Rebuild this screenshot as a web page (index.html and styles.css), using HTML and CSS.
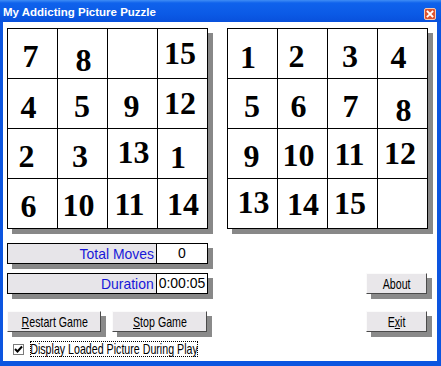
FILE: index.html
```html
<!DOCTYPE html>
<html lang="en">
<head>
    <meta charset="UTF-8">
    <title>My Addicting Picture Puzzle</title>
    <link rel="stylesheet" href="styles.css">
</head>
<body>
    <div class="window">
        <div class="titlebar">
            <span class="title">My Addicting Picture Puzzle</span>
            <span class="close">
                <svg width="12" height="12" viewBox="0 0 12 12">
                    <rect x="0.5" y="0.5" width="11" height="11" rx="1.5" fill="#dc5330" stroke="#f6c9b3"/>
                    <path d="M3.5 3.5 L8.5 8.5 M8.5 3.5 L3.5 8.5" stroke="#fff" stroke-width="1.8" stroke-linecap="square"/>
                </svg>
            </span>
        </div>
        <div class="client">
            <div class="boards">
                <!-- current game -->
                <div class="board">
                    <div class="tile"><span class="p7">7</span></div>
                    <div class="tile"><span class="p8">8</span></div>
                    <div class="tile"></div>
                    <div class="tile"><span class="p15">15</span></div>
                    <div class="tile"><span class="p4">4</span></div>
                    <div class="tile"><span class="p5">5</span></div>
                    <div class="tile"><span class="p9">9</span></div>
                    <div class="tile"><span class="p12">12</span></div>
                    <div class="tile"><span class="p2">2</span></div>
                    <div class="tile"><span class="p3">3</span></div>
                    <div class="tile"><span class="p13">13</span></div>
                    <div class="tile"><span class="p1">1</span></div>
                    <div class="tile"><span class="p6">6</span></div>
                    <div class="tile"><span class="p10">10</span></div>
                    <div class="tile"><span class="p11">11</span></div>
                    <div class="tile"><span class="p14">14</span></div>
                </div>
                <!-- loaded picture -->
                <div class="board">
                    <div class="tile"><span class="p1">1</span></div>
                    <div class="tile"><span class="p2">2</span></div>
                    <div class="tile"><span class="p3">3</span></div>
                    <div class="tile"><span class="p4">4</span></div>
                    <div class="tile"><span class="p5">5</span></div>
                    <div class="tile"><span class="p6">6</span></div>
                    <div class="tile"><span class="p7">7</span></div>
                    <div class="tile"><span class="p8">8</span></div>
                    <div class="tile"><span class="p9">9</span></div>
                    <div class="tile"><span class="p10">10</span></div>
                    <div class="tile"><span class="p11">11</span></div>
                    <div class="tile"><span class="p12">12</span></div>
                    <div class="tile"><span class="p13">13</span></div>
                    <div class="tile"><span class="p14">14</span></div>
                    <div class="tile"><span class="p15">15</span></div>
                    <div class="tile"></div>
                </div>
            </div>

            <div class="controls">
                <div class="stat row-1">
                    <span class="stat-label"><span class="narrow-mid">Total Moves</span></span>
                    <span class="stat-value">0</span>
                </div>
                <div class="stat row-2">
                    <span class="stat-label"><span class="narrow-mid">Duration</span></span>
                    <span class="stat-value">0:00:05</span>
                </div>
                <button class="btn side row-2"><span class="narrow">About</span></button>
                <div class="btn-pair row-3">
                    <button class="btn restart"><span class="narrow"><u>R</u>estart Game</span></button>
                    <button class="btn stop"><span class="narrow"><u>S</u>top Game</span></button>
                </div>
                <button class="btn side row-3"><span class="narrow">E<u>x</u>it</span></button>
                <div class="check row-4">
                    <span class="check-box">
                        <svg width="9" height="9" viewBox="0 0 9 9">
                            <path d="M1 4 L3.5 6.5 L8 1.5" fill="none" stroke="#000" stroke-width="2"/>
                        </svg>
                    </span>
                    <span class="check-label"><span class="narrow">Display Loaded Picture During Play</span></span>
                </div>
            </div>
        </div>
    </div>
</body>
</html>
```

FILE: styles.css
```css
body {
    margin: 0;
    font-family: "Liberation Sans", Arial, sans-serif;
}
.window {
    width: 441px;
    height: 366px;
    box-sizing: border-box;
    background-color: #0c55e0;
    padding: 0 4px 5px 3px;
    display: flex;
    flex-direction: column;
}
.titlebar {
    height: 22px;
    margin: 0 -4px 0 -3px;
    padding: 0 5px 0 3px;
    display: flex;
    align-items: center;
    justify-content: space-between;
    background: linear-gradient(#3f8df5 0, #0f62ec 3px, #0b5ae6 14px, #0850dc 22px);
}
.title {
    color: #fff;
    font-weight: bold;
    font-size: 11.5px;
    padding-top: 2px;
}
.close {
    display: flex;
    margin-top: 6px;
}
.client {
    flex: 1;
    background-color: #fff;
    padding: 6px 0 0 4px;
}
.boards {
    display: flex;
    gap: 19px;
}
.board {
    display: grid;
    grid-template-columns: repeat(4, 50px);
    grid-template-rows: repeat(4, 50px);
    border-left: 1px solid #000;
    border-top: 1px solid #000;
    box-shadow: 5px 5px 0 #888;
    background-color: #fff;
}
.tile {
    border-right: 1px solid #000;
    border-bottom: 1px solid #000;
    display: flex;
    align-items: center;
    justify-content: center;
    font-family: "Liberation Serif", "Times New Roman", serif;
    font-weight: bold;
    font-size: 32px;
    line-height: 1;
    color: #000;
}
/* where each number sits inside its piece of the picture */
.p1 { margin: 7px 0 0 -9px; }
.p2 { margin: 4px 0 0 -12px; }
.p3 { margin: 4px 0 0 -5px; }
.p4 { margin: 7px 0 0 -8px; }
.p5 { margin: 5px 0 0 -1px; }
.p6 { margin: 4px 0 0 -8px; }
.p7 { margin: 5px 0 0 -4px; }
.p8 { margin: 12px 0 0 2px; }
.p9 { margin: 4px 0 0 -2px; }
.p10 { margin: 3px 0 0 -8px; }
.p11 { margin: 0 0 0 -6px; }
.p12 { margin: -2px 0 0 -5px; }
.p13 { margin: -3px 0 0 2px; }
.p14 { margin: 0 0 0 1px; }
.p15 { margin: -2px 0 0 -5px; }

/* the old dialog font is tall and narrow */
.narrow {
    display: inline-block;
    font-size: 15px;
    transform: scaleX(0.71);
}
.narrow-mid {
    display: inline-block;
    font-size: 15px;
    transform: scaleX(0.93);
    transform-origin: right center;
}

.controls {
    margin-top: 14px;
    display: grid;
    grid-template-columns: 201px 1fr;
    grid-template-rows: 21px 21px 29px 16px;
    row-gap: 9px;
}
.row-1 { grid-row: 1; }
.row-2 { grid-row: 2; }
.row-3 { grid-row: 3; align-self: end; }
.row-4 { grid-row: 4; grid-column: 1 / span 2; }
.stat {
    grid-column: 1;
    display: flex;
    box-shadow: 5px 5px 0 #888;
    font-size: 14px;
}
.stat-label {
    flex: 1;
    border: 1px solid #000;
    background-color: #e7e5e9;
    color: #1818d8;
    text-align: right;
    padding-right: 2px;
    line-height: 19px;
}
.stat-value {
    width: 50px;
    border: 1px solid #000;
    border-left: none;
    background-color: #fff;
    color: #000;
    text-align: center;
    line-height: 19px;
}
.btn {
    height: 21px;
    padding: 0;
    border: 1px solid;
    border-color: #fbfbfb #4a4a4a #4a4a4a #fbfbfb;
    background-color: #e9e7ea;
    box-shadow: 5px 5px 0 #8a8a8a;
    font-family: "Liberation Sans", Arial, sans-serif;
    color: #000;
    white-space: nowrap;
}
.btn-pair {
    grid-column: 1;
    display: flex;
    gap: 11px;
}
.restart {
    width: 94px;
}
.stop {
    width: 95px;
}
.side {
    grid-column: 2;
    justify-self: end;
    width: 61px;
    margin-right: 10px;
}
.check {
    display: flex;
    align-items: center;
    padding-left: 6px;
    gap: 6px;
}
.check-box {
    width: 9px;
    height: 9px;
    border: 1px solid #7a7a7a;
    background-color: #fff;
    display: flex;
}
.check-label {
    width: 166px;
    height: 14px;
    border: 1px dotted #000;
    line-height: 14px;
    white-space: nowrap;
    color: #000;
    display: flex;
    justify-content: center;
    overflow: visible;
}
.check-label .narrow {
    flex: none;
}
```
